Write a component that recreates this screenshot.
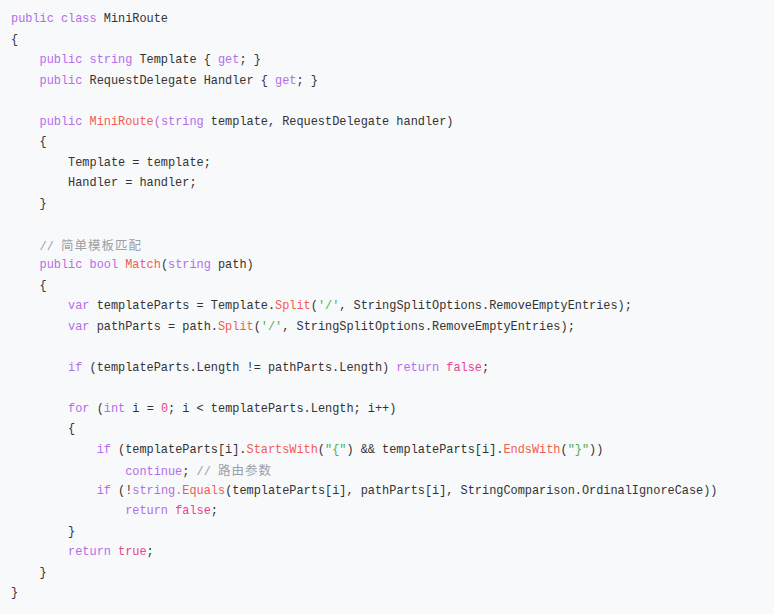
type Tok = [string, string?];

const K = "text-[#b46ee8]"; // keyword
const F = "text-[#f25c54]"; // function / method
const L = "text-[#e8438f]"; // literal
const S = "text-[#4caf50]"; // string
const C = "text-[#9aa0a6]"; // comment

const lines: Tok[][] = [
  [["public class", K], [" MiniRoute"]],
  [["{"]],
  [["    "], ["public string", K], [" Template { "], ["get", K], ["; }"]],
  [["    "], ["public", K], [" RequestDelegate Handler { "], ["get", K], ["; }"]],
  [],
  [["    "], ["public", K], [" "], ["MiniRoute", F], ["(string", K], [" template, RequestDelegate handler)"]],
  [["    {"]],
  [["        Template = template;"]],
  [["        Handler = handler;"]],
  [["    }"]],
  [],
  [["    "], ["// ", C], ["简单模板匹配", "cjk"]],
  [["    "], ["public bool", K], [" "], ["Match", F], ["("], ["string", K], [" path)"]],
  [["    {"]],
  [["        "], ["var", K], [" templateParts = Template."], ["Split", F], ["("], ["'/'", S], [", StringSplitOptions.RemoveEmptyEntries);"]],
  [["        "], ["var", K], [" pathParts = path."], ["Split", F], ["("], ["'/'", S], [", StringSplitOptions.RemoveEmptyEntries);"]],
  [],
  [["        "], ["if", K], [" (templateParts.Length != pathParts.Length) "], ["return", K], [" "], ["false", L], [";"]],
  [],
  [["        "], ["for", K], [" ("], ["int", K], [" i = "], ["0", L], ["; i < templateParts.Length; i++)"]],
  [["        {"]],
  [["            "], ["if", K], [" (templateParts[i]."], ["StartsWith", F], ["("], ["\"{\"", S], [") && templateParts[i]."], ["EndsWith", F], ["("], ["\"}\"", S], ["))"]],
  [["                "], ["continue", K], ["; "], ["// ", C], ["路由参数", "cjk"]],
  [["            "], ["if", K], [" (!"], ["string.", K], ["Equals", F], ["(templateParts[i], pathParts[i], StringComparison.OrdinalIgnoreCase))"]],
  [["                "], ["return", K], [" "], ["false", L], [";"]],
  [["        }"]],
  [["        "], ["return", K], [" "], ["true", L], [";"]],
  [["    }"]],
  [["}"]],
];

export default function App() {
  return (
    <div className="w-[774px] h-[614px] bg-[#f8f9fb] overflow-hidden">
      <pre className="pl-[11px] pt-[9px] font-['Liberation_Mono','Noto_Sans_CJK_SC',monospace] text-[11.9px] leading-[20.5px] text-[#333]">
        {lines.map((ln, i) => (
          <div key={i} className="h-[20.5px] whitespace-pre">
            {ln.map(([t, c], j) =>
              c === "cjk" ? (
                <span key={j} className="text-[12.5px] tracking-[1px] text-[#9aa0a6] font-['Noto_Sans_CJK_SC',sans-serif]">
                  {t}
                </span>
              ) : (
                <span key={j} className={c}>
                  {t}
                </span>
              )
            )}
          </div>
        ))}
      </pre>
    </div>
  );
}
